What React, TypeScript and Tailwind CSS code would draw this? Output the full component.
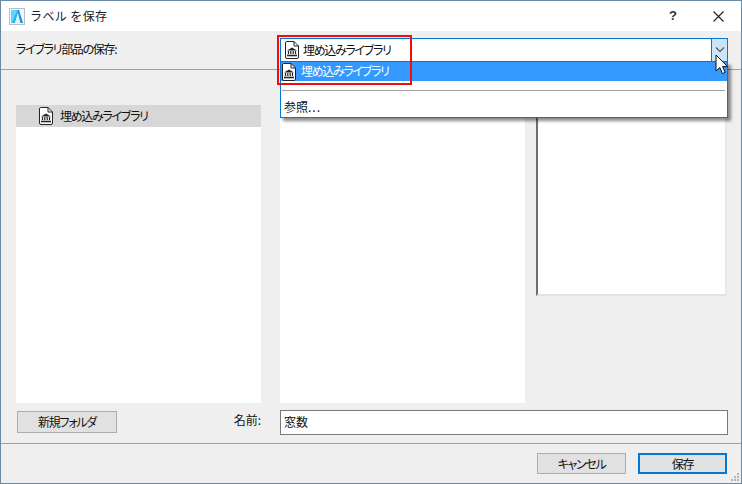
const jp = "font-['Noto_Sans_CJK_JP','Noto_Sans_CJK_SC',sans-serif]";
const narrow = "[font-feature-settings:'palt'] tracking-[-1.3px]";

function LibIcon() {
  return (
    <svg width="14" height="18" viewBox="0 0 14 18" className="shrink-0">
      <path d="M1.5 .5H9L13.5 5V16a1.5 1.5 0 0 1-1.5 1.5H2A1.5 1.5 0 0 1 .5 16V2A1.5 1.5 0 0 1 1.5 .5Z" fill="#fff" stroke="#222" />
      <path d="M9 .5V5H13.5" fill="none" stroke="#222" />
      <path d="M7 6.5L12 9.5H2Z" fill="#222" />
      <path d="M3.5 10V13M5.8 10V13M8.2 10V13M10.5 10V13" stroke="#222" strokeWidth="1.2" />
      <path d="M2 14.5H12" stroke="#222" strokeWidth="1.6" />
    </svg>
  );
}

function AppLogo() {
  return (
    <svg width="16" height="17" viewBox="0 0 16 17" className="shrink-0">
      <rect x=".5" y=".5" width="15" height="16" fill="#f4f8fa" stroke="#b8c0c6" />
      <path d="M2 2H8L3 15H2Z" fill="#5cd6f6" />
      <path d="M3 15L8 2L9 5L6 15Z" fill="#1fb0ee" />
      <path d="M6 15L9 5L11.5 15Z" fill="#d8f4fc" />
      <path d="M8 2H10L14 15H11.5L9 5Z" fill="#1590e0" />
    </svg>
  );
}

function GrayButton({ children, className }: { children: string; className: string }) {
  return (
    <div className={`flex items-center justify-center bg-[#e1e1e1] text-[12px] text-[#111] ${narrow} ${className}`}>
      {children}
    </div>
  );
}

export default function App() {
  return (
    <div className={`relative flex h-[484px] w-[742px] flex-col overflow-hidden border border-[#6d8aa5] bg-[#efefef] ${jp}`}>
      {/* title bar */}
      <div className="flex h-[30px] shrink-0 items-center bg-white pl-[8px] text-[12px] text-[#222]">
        <AppLogo />
        <span className="ml-[5px] tracking-[0.4px]">ラベル を保存</span>
        <span className="ml-auto mr-[36px] font-['Liberation_Sans',sans-serif] text-[13px] font-bold text-[#333]">?</span>
        <svg width="11" height="11" viewBox="0 0 11 11" className="mr-[17px]">
          <path d="M.5 .5L10.5 10.5M10.5 .5L.5 10.5" stroke="#222" strokeWidth="1.1" fill="none" />
        </svg>
      </div>

      {/* library row */}
      <div className={`flex h-[39px] shrink-0 items-center border-b border-[#a0a0a0] pb-[2px] pl-[15px] text-[12px] text-[#111] ${narrow}`}>
        ライブラリ部品の保存:
      </div>

      {/* browser panes */}
      <div className="flex flex-1 items-start pl-[15px] pt-[35px]">
        <div className="h-[298px] w-[245px] bg-white">
          <div className={`flex h-[22px] items-center bg-[#d7d7d7] pl-[23px] text-[12px] text-[#111] ${narrow}`}>
            <LibIcon />
            <span className="ml-[7px]">埋め込みライブラリ</span>
          </div>
        </div>
        <div className="ml-[19px] h-[298px] w-[245px] bg-white" />
        <div className="ml-[11px] h-[191px] w-[191px] border-b-2 border-l-2 border-r-2 border-b-[#e3e3e3] border-l-[#6e6e6e] border-r-[#e8e8e8] bg-white" />
      </div>

      {/* name row */}
      <div className="flex h-[40px] shrink-0 items-start pl-[16px] pt-[7px]">
        <GrayButton className="mt-[1px] h-[22px] w-[100px] border border-[#adadad]">新規フォルダ</GrayButton>
        <span className="mt-[1px] w-[144px] text-right text-[12px] text-[#111]">名前:</span>
        <div className="ml-[19px] flex h-[25px] w-[448px] items-center border border-[#7a7a7a] bg-white pb-[2px] pl-[3px] text-[12px] text-[#111]">
          窓数
        </div>
      </div>

      {/* footer */}
      <div className="flex flex-1 justify-end gap-[12px] border-t border-[#a0a0a0] pr-[14px] pt-[9px]">
        <GrayButton className="h-[21px] w-[89px] border border-[#adadad]">キャンセル</GrayButton>
        <GrayButton className="h-[21px] w-[89px] border-2 border-[#0078d7]">保存</GrayButton>
      </div>

      {/* size grip */}
      <svg width="9" height="9" viewBox="0 0 9 9" className="absolute bottom-[1px] right-[1px]" fill="#b5b5b5">
        <rect x="6" y="0" width="2" height="2" />
        <rect x="3" y="3" width="2" height="2" />
        <rect x="6" y="3" width="2" height="2" />
        <rect x="0" y="6" width="2" height="2" />
        <rect x="3" y="6" width="2" height="2" />
        <rect x="6" y="6" width="2" height="2" />
      </svg>

      {/* open combo box */}
      <div className={`absolute left-[279px] top-[37px] w-[448px] text-[12px] text-[#111] ${narrow}`}>
        <div className="flex h-[24px] items-center border border-[#0078d7] bg-white pl-[4px]">
          <LibIcon />
          <span className="mb-[1px] ml-[4px]">埋め込みライブラリ</span>
          <div className="ml-auto flex h-full w-[16px] items-center justify-center border-l border-[#0078d7] bg-[#cce4f7]">
            <svg width="10" height="6" viewBox="0 0 10 6">
              <path d="M1 .5L5 4.5L9 .5" fill="none" stroke="#555" strokeWidth="1.1" />
            </svg>
          </div>
        </div>
        <div className="h-[56px] border-x border-b border-[#0078d7] bg-white shadow-[3px_3px_3px_rgba(0,0,0,0.45)]">
          <div className="flex h-[19px] items-center bg-[#3399ff] pl-[1px] text-white">
            <LibIcon />
            <span className="mb-[1px] ml-[5px]">埋め込みライブラリ</span>
          </div>
          <div className="ml-[1px] mr-[2px] mt-[9px] h-px bg-[#a0a0a0]" />
          <div className="mt-[7px] pl-[3px] leading-[17px] tracking-normal">参照<span className="tracking-[1px]">...</span></div>
        </div>
      </div>

      {/* red annotation */}
      <div className="absolute left-[276px] top-[34px] h-[50px] w-[135px] border-2 border-[#f40c0c]" />

      {/* mouse cursor */}
      <svg width="14" height="21" viewBox="0 0 14 21" className="absolute left-[714px] top-[53px]">
        <path d="M1 1V17L4.8 13.6L7.4 19.6L10.2 18.4L7.6 12.6H12.5Z" fill="#fff" stroke="#111" strokeWidth="1" />
      </svg>
    </div>
  );
}
